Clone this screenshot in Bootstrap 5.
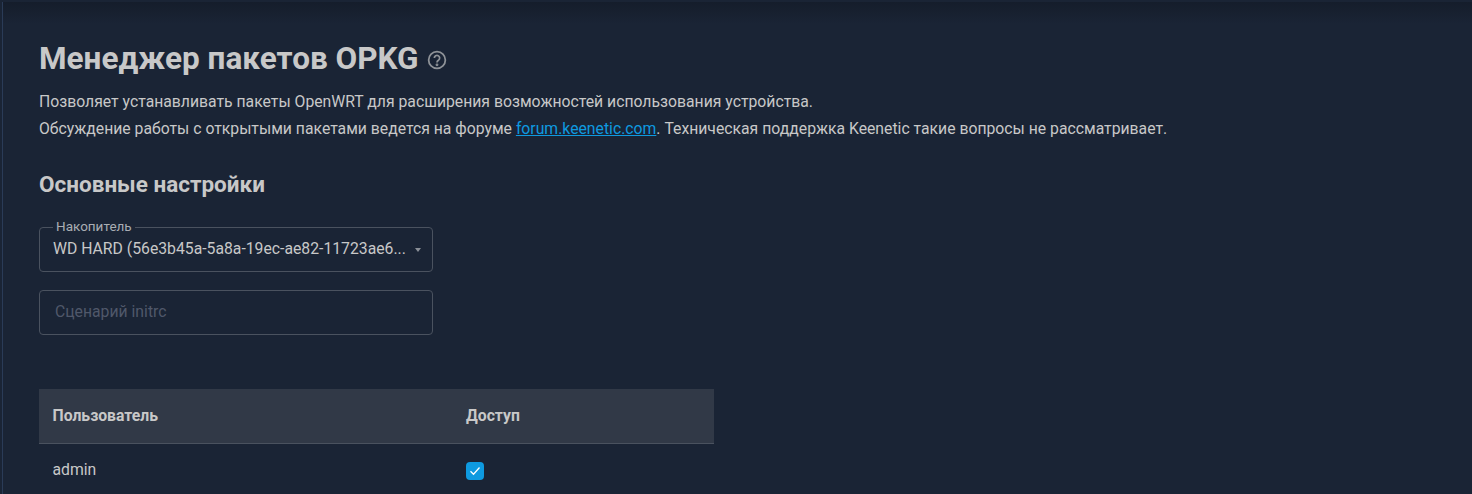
<!DOCTYPE html>
<html lang="ru">
<head>
    <meta charset="UTF-8">
    <title>Менеджер пакетов OPKG</title>
    <link href="https://cdn.jsdelivr.net/npm/bootstrap@5.3.2/dist/css/bootstrap.min.css" rel="stylesheet">
    <style>
        html, body {
            height: 494px;
            overflow: hidden;
        }

        body {
            background: #1a2435;
            color: #c8c8c8;
            font-family: Roboto, "Liberation Sans", sans-serif;
            font-size: 15.75px;
        }

        .page-shell {
            height: 492px;
            margin: 2px 0 0 2px;
            padding: 39px 36px 0 36px;
            border-left: 1px solid #2a3b57;
            background: linear-gradient(#151d2b 0, #1a2435 22px);
        }

        .page-title {
            font-size: 31.5px;
            line-height: 36px;
            font-weight: 700;
            margin: 0 0 11px;
            color: #c8c8c8;
        }

        .help-icon {
            width: 22px;
            height: 22px;
            margin-left: 0;
            vertical-align: -2px;
        }

        .page-desc {
            line-height: 27px;
            margin: 0;
        }

        .page-desc a {
            color: #0e9ae0;
        }

        .section-title {
            font-size: 22.5px;
            line-height: 28px;
            font-weight: 700;
            margin: 28px 0 29px;
            color: #c8c8c8;
        }

        .field-box {
            width: 394px;
            height: 45px;
            border: 1px solid #4a525f;
            border-radius: 4px;
            padding: 0 13px 2px;
        }

        .field-legend {
            position: absolute;
            left: 13px;
            top: -9px;
            padding: 0 3px;
            background: #1a2435;
            font-size: 13.5px;
            line-height: 14px;
            color: #a9adb3;
        }

        .field-value {
            white-space: nowrap;
        }

        .field-arrow {
            width: 0;
            height: 0;
            border-left: 3.5px solid transparent;
            border-right: 3.5px solid transparent;
            border-top: 4px solid #8a8f97;
            margin-right: -2px;
            margin-top: 2px;
        }

        .field-hint {
            color: #50586a;
            padding-left: 2px;
        }

        .field-gap {
            margin-top: 18px;
        }

        .users-table {
            width: 675px;
            margin-top: 54px;
        }

        .users-head {
            height: 55px;
            background: #313947;
            border-bottom: 1px solid #4a525f;
            font-weight: 700;
        }

        .users-row {
            height: 52px;
        }

        .user-col {
            width: 427px;
            padding-left: 13.5px;
        }

        .access-check {
            width: 18px;
            height: 18px;
            border-radius: 4px;
            background: #0e9ae0;
            margin-top: 1px;
        }
    </style>
</head>
<body>

<div class="page-shell">
    <h1 class="page-title">Менеджер пакетов OPKG
        <svg class="help-icon" viewBox="0 0 20 20" fill="none" stroke="#8f9398" stroke-width="1.6">
            <circle cx="10" cy="10" r="7.6"/>
            <path d="M7.6 8.2a2.4 2.4 0 1 1 3.7 2c-.9.6-1.3 1-1.3 2"/>
            <circle cx="10" cy="14.4" r=".5"/>
        </svg>
    </h1>

    <p class="page-desc">Позволяет устанавливать пакеты OpenWRT для расширения возможностей использования устройства.</p>
    <p class="page-desc">Обсуждение работы с открытыми пакетами ведется на форуме <a href="#">forum.keenetic.com</a>. Техническая поддержка Keenetic такие вопросы не рассматривает.</p>

    <h2 class="section-title">Основные настройки</h2>

    <div class="field-box position-relative d-flex align-items-center justify-content-between">
        <span class="field-legend">Накопитель</span>
        <span class="field-value">WD HARD (56e3b45a-5a8a-19ec-ae82-11723ae6...</span>
        <span class="field-arrow"></span>
    </div>

    <div class="field-box field-gap d-flex align-items-center">
        <span class="field-hint">Сценарий initrc</span>
    </div>

    <div class="users-table">
        <div class="users-head d-flex align-items-center">
            <div class="user-col">Пользователь</div>
            <div>Доступ</div>
        </div>
        <div class="users-row d-flex align-items-center">
            <div class="user-col">admin</div>
            <div class="access-check d-flex align-items-center justify-content-center">
                <svg width="12" height="10" viewBox="0 0 12 10" fill="none" stroke="#fff" stroke-width="1.3">
                    <path d="M1.5 5.2 4.5 8.2 10.5 1.5"/>
                </svg>
            </div>
        </div>
    </div>
</div>

<script src="https://cdn.jsdelivr.net/npm/bootstrap@5.3.2/dist/js/bootstrap.bundle.min.js"></script>
</body>
</html>
